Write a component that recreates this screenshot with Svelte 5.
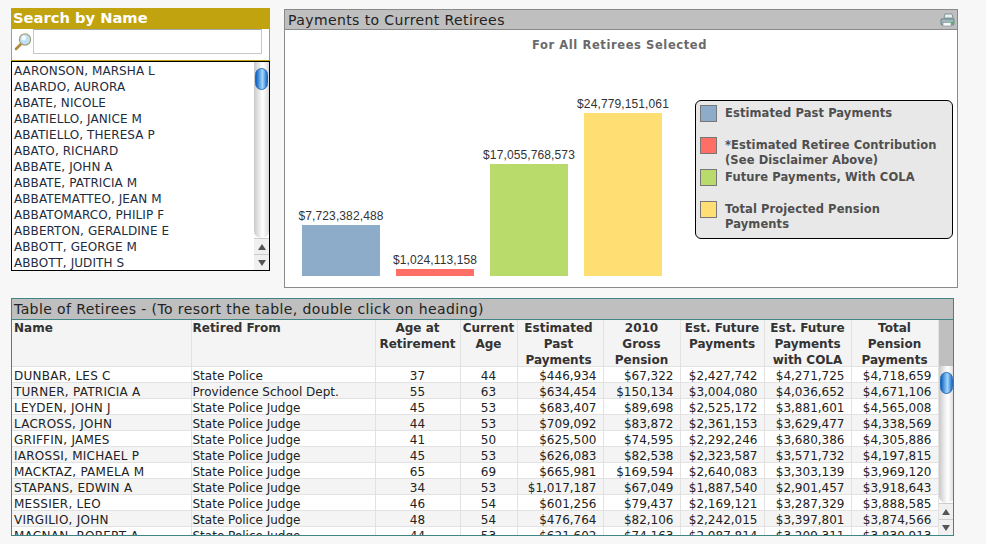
<script>
  const names = ["AARONSON, MARSHA L","ABARDO, AURORA","ABATE, NICOLE","ABATIELLO, JANICE M","ABATIELLO, THERESA P","ABATO, RICHARD","ABBATE, JOHN A","ABBATE, PATRICIA M","ABBATEMATTEO, JEAN M","ABBATOMARCO, PHILIP F","ABBERTON, GERALDINE E","ABBOTT, GEORGE M","ABBOTT, JUDITH S"];
  const bars = [
    { label: "$7,723,382,488", h: 51, c: "#8dacc9" },
    { label: "$1,024,113,158", h: 7, c: "#ff6f66" },
    { label: "$17,055,768,573", h: 112, c: "#b8db6c" },
    { label: "$24,779,151,061", h: 163, c: "#ffdf73" }
  ];
  const legend = [
    { c: "#8dacc9", t: "Estimated Past Payments" },
    { c: "#ff6f66", t: "*Estimated Retiree Contribution", t2: "(See Disclaimer Above)" },
    { c: "#b8db6c", t: "Future Payments, With COLA" },
    { c: "#ffdf73", t: "Total Projected Pension", t2: "Payments" }
  ];
  const heads = [["Name"],["Retired From"],["Age at","Retirement"],["Current","Age"],["Estimated","Past","Payments"],["2010","Gross","Pension"],["Est. Future","Payments"],["Est. Future","Payments","with COLA"],["Total","Pension","Payments"]];
  const rows = [
    ["DUNBAR, LES C","State Police","37","44","$446,934","$67,322","$2,427,742","$4,271,725","$4,718,659"],
    ["TURNER, PATRICIA A","Providence School Dept.","55","63","$634,454","$150,134","$3,004,080","$4,036,652","$4,671,106"],
    ["LEYDEN, JOHN J","State Police Judge","45","53","$683,407","$89,698","$2,525,172","$3,881,601","$4,565,008"],
    ["LACROSS, JOHN","State Police Judge","44","53","$709,092","$83,872","$2,361,153","$3,629,477","$4,338,569"],
    ["GRIFFIN, JAMES","State Police Judge","41","50","$625,500","$74,595","$2,292,246","$3,680,386","$4,305,886"],
    ["IAROSSI, MICHAEL P","State Police Judge","45","53","$626,083","$82,538","$2,323,587","$3,571,732","$4,197,815"],
    ["MACKTAZ, PAMELA M","State Police Judge","65","69","$665,981","$169,594","$2,640,083","$3,303,139","$3,969,120"],
    ["STAPANS, EDWIN A","State Police Judge","34","53","$1,017,187","$67,049","$1,887,540","$2,901,457","$3,918,643"],
    ["MESSIER, LEO","State Police Judge","46","54","$601,256","$79,437","$2,169,121","$3,287,329","$3,888,585"],
    ["VIRGILIO, JOHN","State Police Judge","48","54","$476,764","$82,106","$2,242,015","$3,397,801","$3,874,566"],
    ["MACNAN, ROBERT A","State Police Judge","44","53","$621,602","$74,163","$2,087,814","$3,209,311","$3,830,913"]
  ];
  const widths = [179,184,85,57,86,77,84,87,87];
</script>

<div class="page">
  <div class="top">
    <aside class="left">
      <h2 class="sh">Search by Name</h2>
      <div class="sbox">
        <svg class="mag" width="18" height="18" viewBox="0 0 18 18" aria-hidden="true">
          <line x1="7" y1="11" x2="2" y2="16" stroke="#b08a3a" stroke-width="2.6" stroke-linecap="round"/>
          <circle cx="11" cy="6.5" r="5.6" fill="#bfe0f5" stroke="#a3a37a" stroke-width="1.2"/>
          <circle cx="9.8" cy="5" r="2.4" fill="#f2fbff"/>
        </svg>
        <input class="inp" type="text" />
      </div>
      <div class="list">
        <ul>
          {#each names as n}<li>{n}</li>{/each}
        </ul>
        <div class="sb">
          <div class="track"><div class="thumb"></div></div>
          <div class="arr"><span class="up"></span></div>
          <div class="arr"><span class="dn"></span></div>
        </div>
      </div>
    </aside>

    <section class="chart">
      <header class="ch">
        <span>Payments to Current Retirees</span>
        <svg width="15" height="14" viewBox="0 0 15 14" aria-hidden="true">
          <path d="M5 1h7l1 4H4z" fill="#e8f0f2" stroke="#6f8488" stroke-width=".8"/>
          <path d="M1 6h13v5a1 1 0 0 1-1 1H2a1 1 0 0 1-1-1z" fill="#9db9be" stroke="#5f7a7e" stroke-width=".8"/>
          <rect x="3" y="9.5" width="8" height="3.5" fill="#f6f9f9" stroke="#7d8c90" stroke-width=".6"/>
          <rect x="11.5" y="9" width="2" height="1.6" fill="#2fb52f"/>
        </svg>
      </header>
      <div class="cbody">
        <div class="ctitle">For All Retirees Selected</div>
        <div class="plot">
          <div class="bars">
            {#each bars as b}
              <div class="barcol">
                <div class="val">{b.label}</div>
                <div class="bar" style="height:{b.h}px;background:{b.c}"></div>
              </div>
            {/each}
          </div>
          <div class="legend">
            {#each legend as l}
              <div class="li">
                <span class="sw" style="background:{l.c}"></span>
                <span class="lt">{l.t}{#if l.t2}<br />{l.t2}{/if}</span>
              </div>
            {/each}
          </div>
        </div>
      </div>
    </section>
  </div>

  <section class="tpanel">
    <h2 class="th">Table of Retirees - (To resort the table, double click on heading)</h2>
    <div class="twrap">
      <table>
        <colgroup>{#each widths as w}<col style="width:{w}px" />{/each}</colgroup>
        <thead>
          <tr>
            {#each heads as h, i}
              <th class:l={i < 2}><div class="hc">{#each h as line, j}{#if j}<br />{/if}{line}{/each}</div></th>
            {/each}
          </tr>
        </thead>
        <tbody>
          {#each rows as r, ri}
            <tr class:odd={ri % 2 === 1}>
              {#each r as c, i}<td class:l={i < 2} class:c={i === 2 || i === 3} class:nm={i === 0}>{c}</td>{/each}
            </tr>
          {/each}
        </tbody>
      </table>
      <div class="tsb">
        <div class="thead-fill"></div>
        <div class="track"><div class="thumb"></div></div>
        <div class="arr"><span class="up"></span></div>
        <div class="arr"><span class="dn"></span></div>
      </div>
    </div>
  </section>
</div>

<style>
  :global(body) { margin: 0; background: #f7f7f7; }
  .page { width: 986px; height: 544px; overflow: hidden; box-sizing: border-box; padding: 8px 0 0 11px; font-family: "DejaVu Sans", Verdana, sans-serif; font-size: 12px; color: #222; }
  .top { display: flex; align-items: flex-start; gap: 14px; height: 290px; }
  .left { width: 259px; flex: none; }
  .sh { margin: 0; height: 21px; line-height: 20px; background: #c1a30f; color: #fff; font-size: 14.7px; font-weight: bold; padding-left: 2px; box-sizing: border-box; }
  .sbox { height: 32px; box-sizing: border-box; background: #fff; border: 1px solid #c1a30f; border-top: 0; display: flex; align-items: center; padding: 0 7px 6px 2px; gap: 1px; }
  .mag { flex: none; }
  .inp { flex: 1; min-width: 0; height: 25px; box-sizing: border-box; border: 1px solid #c6c6c6; border-top-color: #a8a8a8; background: #fff; padding: 0; margin: 0; }
  .list { height: 210px; box-sizing: border-box; border: 1px solid #000; background: #fff; display: flex; overflow: hidden; }
  ul { list-style: none; margin: 0; padding: 1px 0 0 2px; flex: 1; }
  li { height: 16px; line-height: 16px; white-space: nowrap; color: #222c40; letter-spacing: .08px; }
  .sb { width: 15px; flex: none; display: flex; flex-direction: column; }
  .track { flex: 1; position: relative; background: linear-gradient(90deg, #c9c9c9, #f4f4f4 45%, #fff 60%, #d8d8d8); border-radius: 0 0 7px 7px; }
  .thumb { position: absolute; left: 1px; top: 6px; width: 13px; height: 22px; border-radius: 7px; background: linear-gradient(90deg, #0b5fc0, #7dbdf2 45%, #a6d4f7 60%, #1a6fce); border: 1px solid #2a6cb5; box-sizing: border-box; }
  .arr { height: 16px; flex: none; display: flex; align-items: center; justify-content: center; background: #f0f0f0; border-top: 1px solid #ccc; box-sizing: border-box; }
  .up { width: 0; height: 0; border: 4px solid transparent; border-top: 0; border-bottom: 6px solid #555; }
  .dn { width: 0; height: 0; border: 4px solid transparent; border-bottom: 0; border-top: 6px solid #555; }

  .chart { width: 674px; height: 279px; margin-top: 1px; box-sizing: border-box; border: 1px solid #8a8a8a; background: #fff; display: flex; flex-direction: column; }
  .ch { height: 20px; flex: none; box-sizing: border-box; background: #bfbfbf; border-bottom: 1px solid #8a8a8a; display: flex; justify-content: space-between; align-items: center; padding: 0 2px 0 3px; font-size: 14px; color: #222; letter-spacing: .4px; }
  .cbody { flex: 1; display: flex; flex-direction: column; min-height: 0; }
  .ctitle { text-align: center; font-size: 11.5px; font-weight: bold; letter-spacing: .6px; color: #6a6a6a; height: 16px; line-height: 16px; margin-top: 7px; padding-right: 3px; }
  .plot { flex: 1; position: relative; display: flex; align-items: flex-start; min-height: 0; }
  .bars { position: absolute; left: 17px; bottom: 11px; display: flex; align-items: flex-end; gap: 16px; }
  .barcol { width: 78px; display: flex; flex-direction: column; align-items: center; }
  .val { font-size: 12px; letter-spacing: .12px; color: #333; height: 17px; line-height: 16px; white-space: nowrap; font-family: "Liberation Sans", Arial, sans-serif; }
  .bar { width: 78px; }
  .legend { position: absolute; left: 410px; top: 47px; width: 258px; height: 139px; box-sizing: border-box; border: 1px solid #000; border-radius: 6px; background: #e8e8e8; padding: 4px 4px 0 4px; display: flex; flex-direction: column; }
  .li { height: 32px; display: flex; gap: 8px; flex: none; color: #4f4f4f; font-weight: bold; font-size: 11.5px; line-height: 15px; letter-spacing: .1px; }
  .sw { width: 17px; height: 17px; flex: none; box-sizing: border-box; border: 1px solid #777; }
  .lt { white-space: nowrap; padding-top: 1px; }

  .tpanel { width: 943px; height: 238px; box-sizing: border-box; border: 1px solid #3f8585; background: #fff; display: flex; flex-direction: column; overflow: hidden; }
  .th { margin: 0; height: 21px; flex: none; box-sizing: border-box; background: #bfbfbf; border-bottom: 1px solid #3f8585; font-weight: normal; font-size: 14px; line-height: 20px; color: #222; padding-left: 2px; letter-spacing: .4px; }
  .twrap { flex: 1; display: flex; min-height: 0; overflow: hidden; }
  table { border-collapse: collapse; table-layout: fixed; width: 926px; flex: none; align-self: flex-start; }
  th { background: #f4f4f4; font-size: 12px; font-weight: bold; vertical-align: top; text-align: center; color: #333; padding: 0 1px; border: 1px solid #e2e2e2; border-top: 0; white-space: nowrap; }
  .hc { height: 46px; line-height: 16px; }
  td { height: 16px; box-sizing: border-box; padding: 3px 6px 0 1px; line-height: 12px; text-align: right; white-space: nowrap; border: 1px solid #e2e2e2; background: #fff; color: #222; }
  td.c { text-align: center; padding-right: 1px; }
  td.l { text-align: left; }
  td.nm { letter-spacing: .25px; }
  tr.odd td { background: #f4f4f4; }
  th.l { text-align: left; }
  th:first-child, td:first-child { border-left: 0; padding-left: 2px; }
  th:nth-child(5) { padding-right: 4px; }
  .tsb { width: 15px; flex: none; display: flex; flex-direction: column; background: #fff; }
  .thead-fill { height: 46px; flex: none; background: #bfbfbf; }
</style>
